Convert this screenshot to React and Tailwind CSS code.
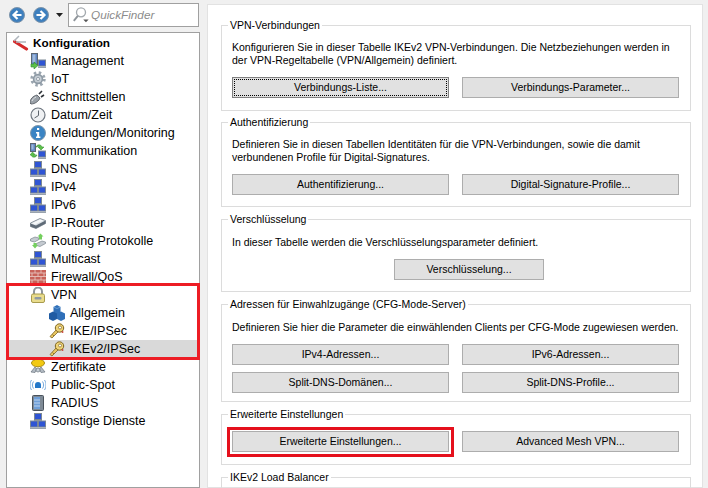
import React from "react";

const Monitor = ({ x, y }) => (
  <g transform={`translate(${x} ${y})`}>
    <rect x="0" y="0" width="7" height="6" fill="#2f55d4" stroke="#7b8794" />
    <rect x="-.5" y="6.5" width="8" height="1.500" fill="#99a3ad" />
  </g>
);

const Network = () => (
  <svg width="16" height="16" viewBox="0 0 16 16">
    <path d="M8 7v2M4 9h8" stroke="#7d8894" fill="none" />
    <Monitor x={4.5} y={0.5} />
    <Monitor x={0.5} y={8} />
    <Monitor x={8.5} y={8} />
  </svg>
);

const Tower = ({ x = 0, y = 0, w = 6, h = 11 }) => (
  <g transform={`translate(${x} ${y})`}>
    <rect x="0.5" y="0.5" width={w} height={h} fill="#5f86c4" stroke="#5b6673" />
    <rect x="1.5" y="1.5" width={w - 3} height={h - 3} fill="#9fb9dc" />
  </g>
);

const ManagementIcon = () => (
  <svg width="16" height="16" viewBox="0 0 16 16">
    <Tower x={1} y={0} />
    <Monitor x={8.5} y={7} />
    <path d="M1 11h3V9l4 3.5L4 16v-2H1z" fill="#5cc04a" stroke="#2f8a2b" strokeWidth=".6" />
  </svg>
);

const GearIcon = () => (
  <svg width="16" height="16" viewBox="0 0 16 16">
    <circle cx="8" cy="8" r="6.2" fill="none" stroke="#9aa5af" strokeWidth="3" strokeDasharray="2.4 2.47" />
    <circle cx="8" cy="8" r="4.4" fill="#c6ced5" stroke="#8d99a4" strokeWidth="1.6" />
    <circle cx="8" cy="8" r="1.6" fill="#eef1f3" stroke="#7f8b97" strokeWidth=".7" />
  </svg>
);

const PlugIcon = () => (
  <svg width="16" height="16" viewBox="0 0 16 16">
    <path d="M0 14c0-4 3-7 7-8l3 3c-1 3-5 6-9 6z" fill="#9aa1a8" stroke="#4b5158" strokeWidth=".8" />
    <path d="M2 12c1-2 2-3 4-4" stroke="#e6e9ec" fill="none" />
    <path d="M9 5l3-3M11 8l3-2" stroke="#2e3237" strokeWidth="1.6" />
  </svg>
);

const ClockIcon = () => (
  <svg width="16" height="16" viewBox="0 0 16 16">
    <circle cx="8" cy="8" r="7" fill="#eff1f3" stroke="#6f7780" strokeWidth="1.2" />
    <path d="M8.5 3.5V8.5L4.5 11" stroke="#5c636b" fill="none" />
  </svg>
);

const InfoIcon = () => (
  <svg width="16" height="16" viewBox="0 0 16 16">
    <circle cx="8" cy="8" r="7.5" fill="#3a84c4" stroke="#7f97ab" />
    <rect x="7" y="3" width="2.2" height="2" fill="#fff" />
    <path d="M6 7h3.2v4.4H10.4V13H6v-1.6h1.1V8.4H6z" fill="#fff" />
  </svg>
);

const KommIcon = () => (
  <svg width="16" height="16" viewBox="0 0 16 16">
    <Tower x={0} y={0} w={5} h={8} />
    <Monitor x={8.5} y={8} />
    <path d="M6 4c1-3 5-3 6 0h2l-3 3-3-3h2c-1-1-2-1-3 0z" fill="#5cc04a" stroke="#2f8a2b" strokeWidth=".5" />
    <path d="M7 12c-1 3-5 3-6 0H0l2.5-3L5.5 12H3.500c1 1 2 1 2.500 0z" fill="#5cc04a" stroke="#2f8a2b" strokeWidth=".5" />
  </svg>
);

const RouterIcon = () => (
  <svg width="16" height="16" viewBox="0 0 16 16">
    <path d="M.5 8 10 3.500l5.500 2v3L6 13.500.5 11.500z" fill="#dfe4e9" stroke="#66717c" strokeWidth=".7" />
    <path d="M.5 8.500 6 10.500 15.500 5.500V8.500L6 13.500.5 11.500z" fill="#5f6b77" />
    <path d="M2 8.200 10 4.500l3 1-8 4z" fill="#f7f9fa" />
  </svg>
);

const RoutingIcon = () => (
  <svg width="16" height="16" viewBox="0 0 16 16">
    <path d="M.5 6 5 4l4 1v1.500L4.500 9 .5 8z" fill="#c4cad0" stroke="#6d7782" strokeWidth=".6" />
    <path d="M6.500 10.500 12 8l3.500 1v1.500L10 13.500l-3.500-1z" fill="#c4cad0" stroke="#6d7782" strokeWidth=".6" />
    <path d="M7.500 3.500l3-3 3 3h-1.500v3h-3v-3z" fill="#74cf5e" />
    <path d="M2 12h1.500V10h3v2H8l-3 3.500z" fill="#74cf5e" />
  </svg>
);

const FirewallIcon = () => (
  <svg width="16" height="16" viewBox="0 0 16 16">
    <rect x="0" y="1" width="16" height="15" fill="#c8635a" />
    <path d="M0 4h16M0 7.500h16M0 11h16M0 14.500h16M5 1v3M11 1v3M2 4v3.500M8 4v3.500M14 4v3.500M5 7.500V11M11 7.500V11M2 11v3.500M8 11v3.500M14 11v3.500" stroke="#e7c3bd" strokeWidth=".9" fill="none" />
  </svg>
);

const LockIcon = () => (
  <svg width="16" height="16" viewBox="0 0 16 16">
    <path d="M4 7V4.500a4 4 0 0 1 8 0V7" fill="none" stroke="#8d949b" strokeWidth="2" />
    <rect x="1.500" y="7" width="13" height="8.500" rx="1.500" fill="#e9dc8c" stroke="#a89b4e" />
    <rect x="4.500" y="10" width="7" height="2.500" rx="1" fill="#8f9aa3" />
  </svg>
);

const BlocksIcon = () => (
  <svg width="16" height="16" viewBox="0 0 16 16">
    <path d="M4.500 2 8 0l3.500 2v6L8 10 4.500 8z" fill="#2f6fb8" />
    <path d="M0 8.500 4 6.500 8 8.500V14l-4 2-4-2z" fill="#1f5ba3" />
    <path d="M8 8.500 12 6.500l4 2V14l-4 2-4-2z" fill="#2f6fb8" />
    <path d="M4.500 2 8 3.500 11.500 2" stroke="#7fb0e0" strokeWidth=".7" fill="none" />
  </svg>
);

const KeyIcon = () => (
  <svg width="16" height="16" viewBox="0 0 16 16">
    <path d="M1 13.500 7.500 6.500l2 2L3 15z" fill="#e9c660" stroke="#7d6522" strokeWidth=".8" />
    <path d="M3.500 11.500 5 13" stroke="#7d6522" strokeWidth=".8" />
    <circle cx="10.500" cy="5" r="4.200" fill="#efd377" stroke="#7d6522" />
    <circle cx="11" cy="4.500" r="1.500" fill="#fff" stroke="#7d6522" strokeWidth=".7" />
    <circle cx="13.500" cy="9" r="1" fill="#c9483b" />
  </svg>
);

const CertIcon = () => (
  <svg width="16" height="16" viewBox="0 0 16 16">
    <path d="M5 8 1 13l4 .5L6.500 10zM11 8l4 5-4 .5L9.500 10z" fill="#b4bcc4" stroke="#69737d" strokeWidth=".7" />
    <circle cx="8" cy="11" r="2" fill="#c5cdd4" stroke="#69737d" strokeWidth=".7" />
    <ellipse cx="8" cy="4" rx="6.500" ry="3.800" fill="#f2c912" stroke="#a98a10" />
  </svg>
);

const SpotIcon = () => (
  <svg width="16" height="16" viewBox="0 0 16 16">
    <path d="M5 11V8a3 3 0 0 1 6 0v3z" fill="#2478c9" />
    <path d="M3.500 4.500c-1.500 2-1.500 5 0 7M12.500 4.500c1.500 2 1.500 5 0 7M1.500 3c-2 3-2 7 0 10M14.500 3c2 3 2 7 0 10" stroke="#74a8dc" strokeWidth="1" fill="none" />
  </svg>
);

const RadiusIcon = () => (
  <svg width="16" height="16" viewBox="0 0 16 16">
    <rect x="2.500" y=".5" width="11" height="15" rx="1" fill="#7e8a96" stroke="#4a535c" />
    <rect x="4" y="2" width="6" height="12" fill="#6f9fd8" />
    <path d="M4 5h6M4 8h6M4 11h6" stroke="#bcd3ee" />
  </svg>
);

const ToolIcon = () => (
  <svg width="16" height="16" viewBox="0 0 16 16">
    <path d="M1.500 6.500 13.500 14" stroke="#d42b2b" strokeWidth="3.200" strokeLinecap="round" />
    <path d="M1 6 6 1M3 7h10" stroke="#aeb5bc" strokeWidth="1.500" fill="none" />
  </svg>
);

const BackIcon = ({ flip }) => (
  <svg width="16" height="16" viewBox="0 0 16 16" className={flip ? "-scale-x-100" : ""}>
    <circle cx="8" cy="8" r="7.500" fill="#3d7fbe" stroke="#7d94aa" />
    <path d="M12.500 8H5M8.500 4 4.500 8l4 4" stroke="#fff" strokeWidth="2.200" fill="none" />
  </svg>
);

const FinderIcon = () => (
  <svg width="18" height="18" viewBox="0 0 20 20">
    <circle cx="10" cy="7" r="5" fill="#fff" stroke="#a3a9ae" strokeWidth="1.500" />
    <path d="M6.500 11 2 16.500" stroke="#8f959b" strokeWidth="2.200" />
    <path d="M12.500 15h6l-3 3z" fill="#555" />
  </svg>
);

function TreeRow({ label, icon, child, selected }) {
  return (
    <div className={`flex h-[18px] items-center gap-[5px] ${child ? "pl-[42px]" : "pl-[23px]"} ${selected ? "bg-[#d9d9d9]" : ""}`}>
      <span className="h-4 w-4 shrink-0">{icon}</span>
      <span className="text-[12.5px] leading-none">{label}</span>
    </div>
  );
}

function Btn({ label, focus, className = "w-[217px]" }) {
  return (
    <button className={`flex h-[21px] items-center justify-center border bg-[#e1e1e1] text-[10.5px] leading-none text-black ${focus ? "border-[#808080] outline-1 outline-offset-[-3px] outline-dotted outline-black" : "border-[#adadad]"} ${className}`}>
      {label}
    </button>
  );
}

function Group({ title, className, children }) {
  return (
    <fieldset className={`shrink-0 border border-[#dcdcdc] px-[10px] ${className}`}>
      <legend className="ml-[-4px] px-[2px] text-[10.5px] leading-[14px] text-black">{title}</legend>
      {children}
    </fieldset>
  );
}

const BtnRow = ({ children, className = "" }) => <div className={`flex gap-[13px] ${className}`}>{children}</div>;

const Text = ({ children, className = "pt-[9px] pb-[10px]" }) => <p className={`text-[10.5px] leading-[13px] text-black ${className}`}>{children}</p>;

export default function App() {
  return (
    <div className="flex h-[488px] w-[708px] overflow-hidden bg-[#f0f0f0] font-['Liberation_Sans',sans-serif] text-black">
      {/* linke Spalte */}
      <div className="flex w-[200px] shrink-0 flex-col pl-[6px]">
        <div className="flex h-[30px] items-center pl-[3px]">
          <BackIcon />
          <span className="ml-[8px]"><BackIcon flip /></span>
          <svg width="7" height="4" viewBox="0 0 7 4" className="ml-[7px]"><path d="M0 0h7L3.500 4z" fill="#222" /></svg>
          <div className="ml-[5px] flex h-[24px] w-[131px] items-center gap-[1px] border border-[#a0a0a0] bg-white pl-[3px]">
            <FinderIcon />
            <span className="text-[11.75px] italic text-[#8c8c8c]">QuickFinder</span>
          </div>
        </div>
        <div className="mt-[2px] flex-1 border border-[#a0a0a0] bg-white pt-[1px]">
          <div className="flex h-[18px] items-center gap-[4px] pl-[6px]">
            <span className="h-4 w-4 shrink-0"><ToolIcon /></span>
            <span className="text-[11.75px] leading-none font-bold">Konfiguration</span>
          </div>
          <TreeRow label="Management" icon={<ManagementIcon />} />
          <TreeRow label="IoT" icon={<GearIcon />} />
          <TreeRow label="Schnittstellen" icon={<PlugIcon />} />
          <TreeRow label="Datum/Zeit" icon={<ClockIcon />} />
          <TreeRow label="Meldungen/Monitoring" icon={<InfoIcon />} />
          <TreeRow label="Kommunikation" icon={<KommIcon />} />
          <TreeRow label="DNS" icon={<Network />} />
          <TreeRow label="IPv4" icon={<Network />} />
          <TreeRow label="IPv6" icon={<Network />} />
          <TreeRow label="IP-Router" icon={<RouterIcon />} />
          <TreeRow label="Routing Protokolle" icon={<RoutingIcon />} />
          <TreeRow label="Multicast" icon={<Network />} />
          <TreeRow label="Firewall/QoS" icon={<FirewallIcon />} />
          <div className="relative">
            <TreeRow label="VPN" icon={<LockIcon />} />
            <TreeRow child label="Allgemein" icon={<BlocksIcon />} />
            <TreeRow child label="IKE/IPSec" icon={<KeyIcon />} />
            <TreeRow child selected label="IKEv2/IPSec" icon={<KeyIcon />} />
            <div className="absolute top-[-3px] right-[-1px] bottom-[-2px] left-[-1px] border-[3px] border-[#ed1c24]" />
          </div>
          <TreeRow label="Zertifikate" icon={<CertIcon />} />
          <TreeRow label="Public-Spot" icon={<SpotIcon />} />
          <TreeRow label="RADIUS" icon={<RadiusIcon />} />
          <TreeRow label="Sonstige Dienste" icon={<Network />} />
        </div>
      </div>

      {/* rechte Spalte */}
      <div className="mt-[4px] ml-[7px] flex w-[496px] shrink-0 flex-col border border-[#e2e2e2] bg-white pt-[13px] pl-[13px]">
        <Group title="VPN-Verbindungen" className="h-[93px] w-[470px]">
          <Text>Konfigurieren Sie in dieser Tabelle IKEv2 VPN-Verbindungen. Die Netzbeziehungen werden in der VPN-Regeltabelle (VPN/Allgemein) definiert.</Text>
          <BtnRow>
            <Btn focus label="Verbindungs-Liste..." />
            <Btn label="Verbindungs-Parameter..." />
          </BtnRow>
        </Group>
        <Group title="Authentifizierung" className="mt-[4px] h-[92px] w-[470px]">
          <Text>Definieren Sie in diesen Tabellen Identitäten für die VPN-Verbindungen, sowie die damit verbundenen Profile für Digital-Signatures.</Text>
          <BtnRow>
            <Btn label="Authentifizierung..." />
            <Btn label="Digital-Signature-Profile..." />
          </BtnRow>
        </Group>
        <Group title="Verschlüsselung" className="mt-[5px] h-[80px] w-[470px]">
          <Text className="pt-[10px] pb-[10px]">In dieser Tabelle werden die Verschlüsselungsparameter definiert.</Text>
          <Btn label="Verschlüsselung..." className="ml-[162px] w-[150px]" />
        </Group>
        <Group title="Adressen für Einwahlzugänge (CFG-Mode-Server)" className="mt-[5px] h-[105px] w-[470px]">
          <Text className="pt-[10px] pb-[10px]">Definieren Sie hier die Parameter die einwählenden Clients per CFG-Mode zugewiesen werden.</Text>
          <BtnRow>
            <Btn label="IPv4-Adressen..." />
            <Btn label="IPv6-Adressen..." />
          </BtnRow>
          <BtnRow className="mt-[7px]">
            <Btn label="Split-DNS-Domänen..." />
            <Btn label="Split-DNS-Profile..." />
          </BtnRow>
        </Group>
        <Group title="Erweiterte Einstellungen" className="mt-[5px] h-[58px] w-[470px]">
          <BtnRow className="mt-[10px]">
            <div className="relative">
              <Btn label="Erweiterte Einstellungen..." />
              <div className="absolute top-[-4px] right-[-5px] bottom-[-5px] left-[-5px] border-[3px] border-[#e5101c]" />
            </div>
            <Btn label="Advanced Mesh VPN..." />
          </BtnRow>
        </Group>
        <Group title="IKEv2 Load Balancer" className="mt-[5px] h-[60px] w-[470px]" />
      </div>
    </div>
  );
}
